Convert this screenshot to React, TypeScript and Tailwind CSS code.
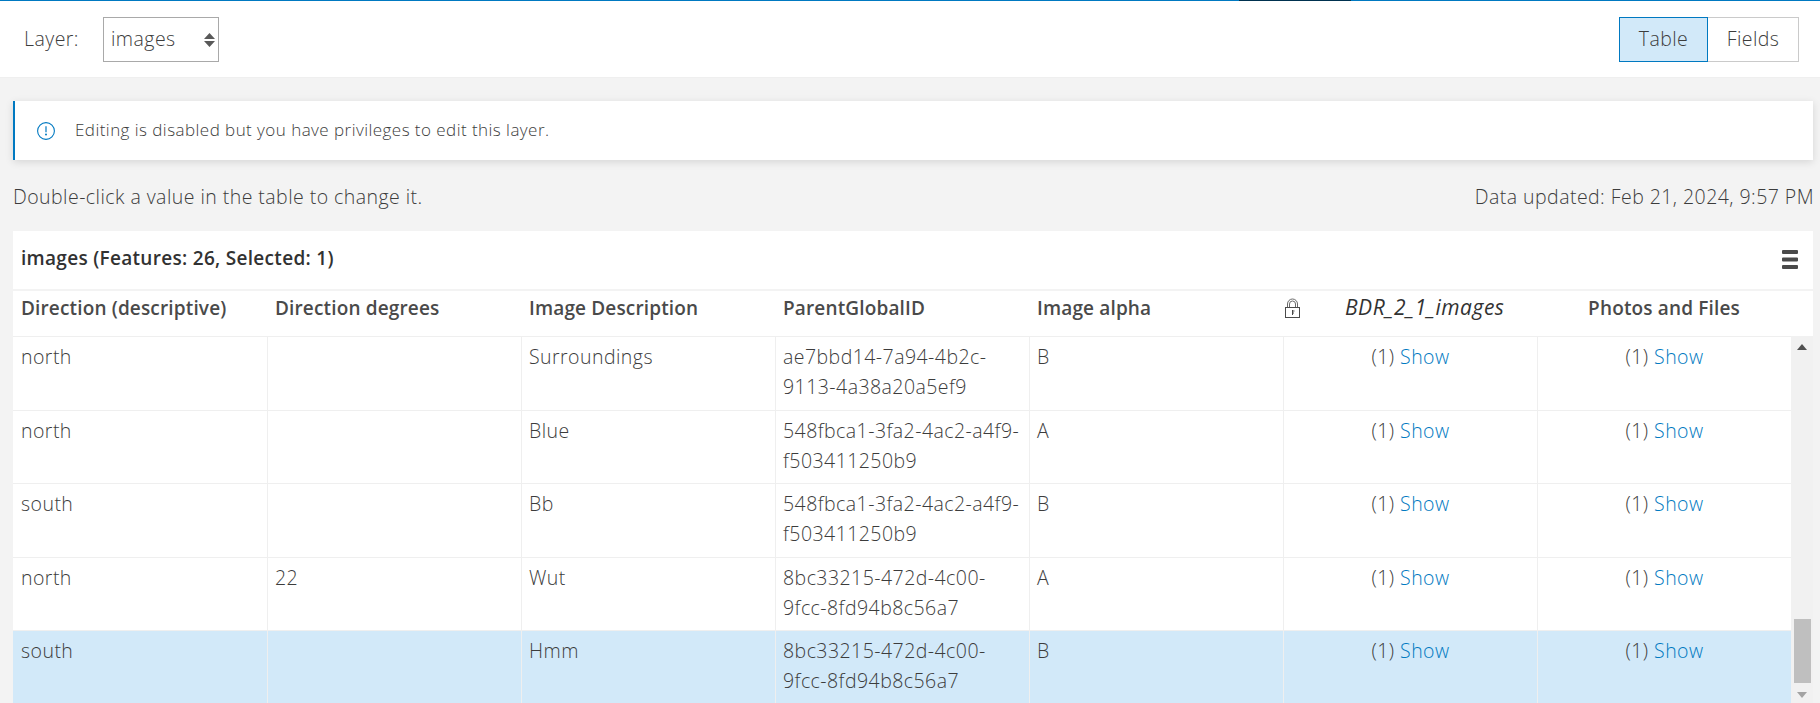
const font = "font-['Open_Sans','Liberation_Sans',sans-serif]";

const columns = [
  "Direction (descriptive)",
  "Direction degrees",
  "Image Description",
  "ParentGlobalID",
  "Image alpha",
];

const rows = [
  { direction: "north", degrees: "", description: "Surroundings", parent: ["ae7bbd14-7a94-4b2c-", "9113-4a38a20a5ef9"], alpha: "B" },
  { direction: "north", degrees: "", description: "Blue", parent: ["548fbca1-3fa2-4ac2-a4f9-", "f503411250b9"], alpha: "A" },
  { direction: "south", degrees: "", description: "Bb", parent: ["548fbca1-3fa2-4ac2-a4f9-", "f503411250b9"], alpha: "B" },
  { direction: "north", degrees: "22", description: "Wut", parent: ["8bc33215-472d-4c00-", "9fcc-8fd94b8c56a7"], alpha: "A" },
  { direction: "south", degrees: "", description: "Hmm", parent: ["8bc33215-472d-4c00-", "9fcc-8fd94b8c56a7"], alpha: "B", selected: true },
];

function InfoIcon() {
  return (
    <svg width="18" height="18" viewBox="0 0 18 18" fill="none" className="shrink-0">
      <circle cx="9" cy="9" r="8.4" stroke="#0079c1" strokeWidth="1.1" />
      <path d="M9 4.2v6" stroke="#0079c1" strokeWidth="1.2" />
      <circle cx="9" cy="12.6" r="1" fill="#0079c1" />
    </svg>
  );
}

function LockIcon() {
  return (
    <svg width="15" height="20" viewBox="0 0 15 20" fill="none" className="shrink-0">
      <path d="M2.5 9V6a5 5 0 0 1 10 0v3" stroke="#6a6a6a" />
      <path d="M4.5 9V6a3 3 0 0 1 6 0v3" stroke="#6a6a6a" />
      <rect x="0.5" y="9.5" width="14" height="10" stroke="#4a4a4a" />
      <path d="M7.5 12v5M7.5 13h2M7.5 15h1.5" stroke="#4a4a4a" />
    </svg>
  );
}

function Cell({ children, center }: { children?: React.ReactNode; center?: boolean }) {
  return (
    <div
      className={`w-[254px] shrink-0 whitespace-nowrap border-r border-[#efefef] px-[7px] pt-[5px] text-[19.5px] font-light leading-[30px] ${
        center ? "text-center" : ""
      }`}
    >
      {children}
    </div>
  );
}

function ShowLink() {
  return (
    <span>
      (1) <a className="text-[#0079c1]">Show</a>
    </span>
  );
}

export default function App() {
  return (
    <div className={`${font} flex h-[703px] w-[1820px] flex-col overflow-hidden bg-[#f3f3f3] tracking-[0.45px] text-[#3c3c3c]`}>
      <div className="flex h-px shrink-0">
        <div className="w-[1239px] bg-[#0079c1]" />
        <div className="w-[112px] bg-[#00314f]" />
        <div className="flex-1 bg-[#0079c1]" />
      </div>

      <div className="flex h-[77px] shrink-0 items-center justify-between border-b border-[#efefef] bg-white pl-6 pr-[21px] pt-px font-light">
        <div className="flex items-center gap-[25px]">
          <span className="w-[54px] whitespace-nowrap pb-[2px] text-[19.5px]">Layer:</span>
          <div className="relative h-[45px] w-[116px]">
            <select
              defaultValue="images"
              className="h-full w-full appearance-none rounded-none border border-[#a9a9a9] bg-white pb-[2px] pl-[7px] text-[19.5px] outline-none"
            >
              <option>images</option>
            </select>
            <svg width="11" height="14" viewBox="0 0 11 14" className="pointer-events-none absolute right-[4px] top-[16px]">
              <path d="M5.5 0l5.5 6H0zM5.5 14l5.5-6H0z" fill="#595959" />
            </svg>
          </div>
        </div>
        <div className="flex h-[45px] text-[19.5px]">
          <button type="button" className="w-[89px] border border-[#0079c1] bg-[#d2e9f9] pb-[2px]">
            Table
          </button>
          <button type="button" className="w-[91px] border border-l-0 border-[#cacaca] bg-white pb-[2px]">
            Fields
          </button>
        </div>
      </div>

      <div className="mx-[13px] mt-[23px] flex h-[59px] w-[1800px] shrink-0 items-center gap-5 border-l-[2px] border-[#0079c1] bg-white pl-[22px] text-[17px] font-light shadow-[0_2px_8px_rgba(0,0,0,0.12)]">
        <InfoIcon />
        <span className="pb-px">Editing is disabled but you have privileges to edit this layer.</span>
      </div>

      <div className="mx-[13px] flex h-[71px] w-[1801px] shrink-0 items-center justify-between pt-[2px] text-[19.5px] font-light">
        <span>Double-click a value in the table to change it.</span>
        <span>Data updated: Feb 21, 2024, 9:57 PM</span>
      </div>

      <div className="mx-[13px] flex w-[1800px] flex-1 flex-col bg-white">
        <div className="flex h-[60px] shrink-0 items-center justify-between border-b-2 border-[#f3f3f3] pb-[2px] pl-2 pr-[15px]">
          <span className="pb-[2px] text-[19px] font-semibold tracking-[0.3px] text-[#323232]">images (Features: 26, Selected: 1)</span>
          <svg width="16" height="19" viewBox="0 0 16 19">
            <path d="M0 1a1 1 0 0 1 1-1h14a1 1 0 0 1 1 1v2a1 1 0 0 1-1 1H1a1 1 0 0 1-1-1zM0 8.5a1 1 0 0 1 1-1h14a1 1 0 0 1 1 1v2a1 1 0 0 1-1 1H1a1 1 0 0 1-1-1zM0 16a1 1 0 0 1 1-1h14a1 1 0 0 1 1 1v2a1 1 0 0 1-1 1H1a1 1 0 0 1-1-1z" fill="#4a4a4a" />
          </svg>
        </div>

        <div className="flex h-[45px] shrink-0 items-center pb-[11px] text-[19px] font-semibold tracking-[0.15px] text-[#4a4a4a]">
          {columns.map((name) => (
            <div key={name} className="w-[254px] shrink-0 whitespace-nowrap pl-2">
              {name}
            </div>
          ))}
          <div className="flex w-[254px] shrink-0 items-center pl-[2px]">
            <LockIcon />
            <span className="ml-[45px] whitespace-nowrap text-[21px] font-normal italic tracking-[0.5px] text-[#323232]">BDR_2_1_images</span>
          </div>
          <div className="w-[254px] shrink-0 whitespace-nowrap text-center">Photos and Files</div>
        </div>

        <div className="flex min-h-0 flex-1">
          <div className="min-w-0 flex-1 overflow-hidden">
            {rows.map((row) => (
              <div
                key={row.description}
                className={`flex h-[73.5px] border-t border-[#efefef] pl-px ${row.selected ? "bg-[#d2e9f9]" : "bg-white"}`}
              >
                <Cell>{row.direction}</Cell>
                <Cell>{row.degrees}</Cell>
                <Cell>{row.description}</Cell>
                <Cell>
                  {row.parent[0]}
                  <br />
                  {row.parent[1]}
                </Cell>
                <Cell>{row.alpha}</Cell>
                <Cell center>
                  <ShowLink />
                </Cell>
                <Cell center>
                  <ShowLink />
                </Cell>
              </div>
            ))}
          </div>

          <div className="flex w-[22px] shrink-0 flex-col items-center justify-between bg-[#f1f1f1] pb-[6px] pt-[8px]">
            <svg width="10" height="6" viewBox="0 0 10 6">
              <path d="M5 0l5 6H0z" fill="#505050" />
            </svg>
            <div className="mt-auto mb-[9px] h-[64px] w-[17px] bg-[#bfbfbf]" />
            <svg width="10" height="6" viewBox="0 0 10 6">
              <path d="M5 6l5-6H0z" fill="#a3a3a3" />
            </svg>
          </div>
        </div>
      </div>
    </div>
  );
}
